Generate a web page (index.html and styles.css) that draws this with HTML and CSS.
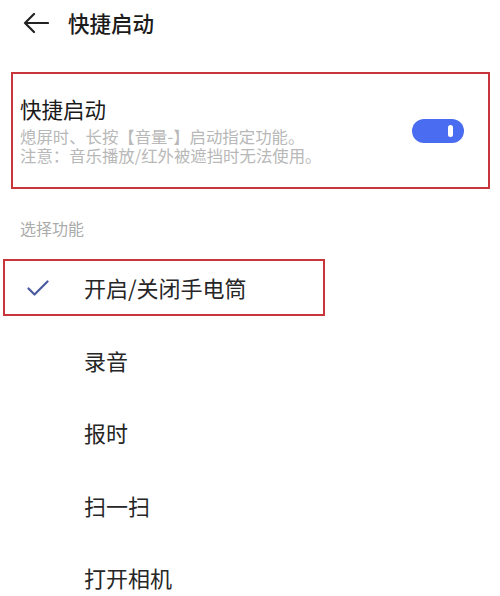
FILE: index.html
```html
<!DOCTYPE html>
<html lang="zh-CN">
<head>
<meta charset="utf-8">
<link rel="stylesheet" href="styles.css">
</head>
<body>
<div class="header">
  <svg class="back" width="26" height="22" viewBox="0 0 26 22"><path d="M25 11H2M11 2L2 11l9 9" fill="none" stroke="#222" stroke-width="2.2" stroke-linecap="round" stroke-linejoin="round"/></svg>
  <span class="htitle">快捷启动</span>
</div>
<div class="card">
  <div class="card-text">
    <div class="card-title">快捷启动</div>
    <p class="desc">熄屏时、长按【音量-】启动指定功能。<br>注意：音乐播放/红外被遮挡时无法使用。</p>
  </div>
  <div class="toggle"><span class="knob"></span></div>
</div>
<div class="section">选择功能</div>
<div class="list">
  <div class="item"><div class="box selected"><svg class="check" width="22" height="16" viewBox="0 0 22 16"><path d="M1.5 8.5l6 6L20.5 1.5" fill="none" stroke="#4a5a9e" stroke-width="2.2" stroke-linecap="round" stroke-linejoin="round"/></svg><span class="label">开启/关闭手电筒</span></div></div>
  <div class="item"><div class="box"><span class="check-space"></span><span class="label">录音</span></div></div>
  <div class="item"><div class="box"><span class="check-space"></span><span class="label">报时</span></div></div>
  <div class="item"><div class="box"><span class="check-space"></span><span class="label">扫一扫</span></div></div>
  <div class="item"><div class="box"><span class="check-space"></span><span class="label">打开相机</span></div></div>
</div>
</body>
</html>
```
FILE: styles.css
```css
* { box-sizing: border-box; }
html, body { margin: 0; padding: 0; background: #fff; }
body {
  font-family: "Noto Sans CJK SC", "Noto Sans", sans-serif;
  color: #222;
  width: 500px;
  height: 596px;
  overflow: hidden;
}
.header {
  height: 46px;
  display: flex;
  align-items: center;
  padding-left: 23px;
}
.back { display: block; }
.htitle {
  margin-left: 19px;
  font-size: 21.5px;
  font-weight: 500;
  line-height: 26px;
  color: #1c1c1c;
}
.card {
  margin: 26px 10px 0 11px;
  border: 2px solid #c8363c;
  height: 117px;
  display: flex;
  align-items: center;
  padding: 0 24px 0 7px;
}
.card-text { flex: 1; }
.card-title {
  font-size: 21.5px;
  line-height: 26px;
  color: #1a1a1a;
  margin-bottom: 5px;
}
.desc {
  margin: 0;
  font-size: 16.4px;
  line-height: 19.5px;
  color: #b8b8b8;
}
.toggle {
  width: 52px;
  height: 24px;
  border-radius: 12px;
  background: #4a6cf0;
  display: flex;
  align-items: center;
  justify-content: flex-end;
  padding-right: 11px;
}
.knob {
  width: 5px;
  height: 12px;
  border-radius: 3px;
  background: #fff;
}
.section {
  margin: 29px 0 0 20px;
  font-size: 16px;
  line-height: 20px;
  color: #ababab;
}
.list { margin-top: 13px; }
.item {
  height: 72.5px;
  display: flex;
  align-items: center;
}
.box {
  margin-left: 3px;
  width: 322px;
  height: 57px;
  border: 2px solid transparent;
  display: flex;
  align-items: center;
  padding-left: 22px;
}
.box.selected { border-color: #c8363c; }
.check { display: block; margin-top: 1px; }
.check-space { display: block; width: 22px; }
.label {
  margin-left: 35px;
  font-size: 22px;
  line-height: 26px;
  color: #262626;
}
```
